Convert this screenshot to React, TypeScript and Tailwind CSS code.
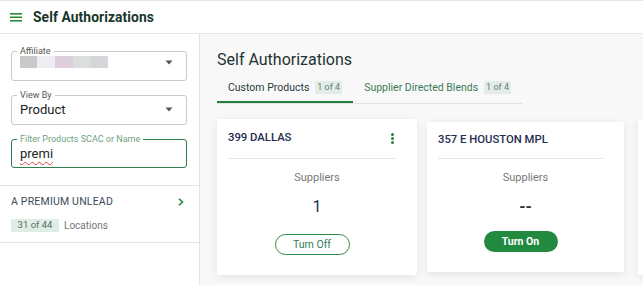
import React from "react";

const font = { fontFamily: "Roboto, 'Liberation Sans', sans-serif" };

function Caret() {
  return (
    <svg width="8" height="5" viewBox="0 0 8 5" className="shrink-0">
      <path d="M0.5 0.5 L7.5 0.5 L4 4.5 Z" fill="#555" />
    </svg>
  );
}

function Card({
  title,
  value,
  on,
  big,
}: {
  title: string;
  value: string;
  on: boolean;
  big: boolean;
}) {
  return (
    <div
      className={`shrink-0 bg-white rounded-[2px] shadow-[0_2px_8px_rgba(0,0,0,0.09)] pl-[11px] pr-[21px] flex flex-col ${
        big ? "w-[200px] h-[156px]" : "w-[197px] h-[150px]"
      }`}
    >
      <div
        className={`flex items-center justify-between border-b border-[#e6e6e6] ${
          big ? "h-[40px] pb-[1px]" : "h-[37px] pb-0"
        }`}
      >
        <span className="text-[11.3px] font-medium text-[#1f2d50]">{title}</span>
        {big && (
          <span className="flex flex-col gap-[1px] mr-[2px]">
            <span className="w-[3px] h-[3px] rounded-full bg-[#22803c]" />
            <span className="w-[3px] h-[3px] rounded-full bg-[#22803c]" />
            <span className="w-[3px] h-[3px] rounded-full bg-[#22803c]" />
          </span>
        )}
      </div>
      <div className="flex flex-col items-center">
        <div className="mt-[12px] text-[11px] leading-[14px] text-[#777] translate-x-[5px]">Suppliers</div>
        <div
          className={`mt-[12px] text-[16px] leading-[20px] translate-x-[5px] ${
            on ? "text-[#1f2f4a]" : "text-[#333] font-bold"
          }`}
        >
          {value}
        </div>
        {on ? (
          <button className="mt-[17px] w-[75px] h-[21px] rounded-full border border-[#2e8b47] text-[10.5px] text-[#2f7d5a] flex items-center justify-center">
            Turn Off
          </button>
        ) : (
          <button className="mt-[14px] w-[74px] h-[21px] rounded-full bg-[#228a3e] text-[10.5px] font-bold text-white flex items-center justify-center">
            Turn On
          </button>
        )}
      </div>
    </div>
  );
}

export default function App() {
  return (
    <div style={font} className="w-[643px] h-[285px] overflow-hidden bg-white flex flex-col">
      {/* header */}
      <div className="h-[34px] shrink-0 border-t border-b border-[#e6e6e6] flex items-center pl-[10px]">
        <svg width="12" height="9" viewBox="0 0 12 9" className="mt-[1px]">
          <rect x="0" y="0" width="12" height="1.6" fill="#2a8a40" />
          <rect x="0" y="3.5" width="12" height="1.6" fill="#2a8a40" />
          <rect x="0" y="7" width="12" height="1.6" fill="#2a8a40" />
        </svg>
        <span className="ml-[11px] text-[13.8px] font-bold text-[#17352a] tracking-[0.1px]">Self Authorizations</span>
      </div>

      <div className="flex flex-1 min-h-0">
        {/* sidebar */}
        <div className="w-[200px] shrink-0 border-r border-[#e3e3e3] bg-white flex flex-col">
          <div className="pt-[12px] pl-[11px] pr-[12px] pb-[17px] border-b border-[#e3e3e3] flex flex-col">
            <fieldset className="h-[35px] border border-[#c9c9c9] rounded-[3px] flex flex-col">
              <legend className="ml-[5px] px-[3px] text-[9px] leading-[10px] text-[#555]">Affiliate</legend>
              <div className="flex-1 flex items-center justify-between pl-[8px] pr-[13px] pb-[3px]">
                <div className="flex h-[12px]">
                  <span className="w-[17px] bg-[#c9c9c9]" />
                  <span className="w-[18px] bg-[#eceef2]" />
                  <span className="w-[18px] bg-[#ddd0dc]" />
                  <span className="w-[18px] bg-[#dcdedd]" />
                  <span className="w-[17px] bg-[#d4d6da]" />
                </div>
                <Caret />
              </div>
            </fieldset>
            <fieldset className="mt-[9px] h-[35px] border border-[#c9c9c9] rounded-[3px] flex flex-col">
              <legend className="ml-[5px] px-[3px] text-[9px] leading-[10px] text-[#555]">View By</legend>
              <div className="flex-1 flex items-center justify-between pl-[8px] pr-[13px] pb-[2px]">
                <span className="text-[13px] text-[#222]">Product</span>
                <Caret />
              </div>
            </fieldset>
            <fieldset className="mt-[9px] h-[34px] border border-[#2e7d4f] rounded-[3px] flex flex-col">
              <legend className="ml-[5px] px-[3px] text-[9px] leading-[10px] text-[#6f9f80]">
                Filter Products SCAC or Name
              </legend>
              <div className="flex-1 flex items-center pl-[8px] pb-[5px]">
                <span className="text-[13px] text-[#222] underline decoration-wavy decoration-[#e04040] decoration-[1px] underline-offset-[3px]">
                  premi
                </span>
              </div>
            </fieldset>
          </div>
          <div className="h-[57px] border-b border-[#e3e3e3] pl-[11px] pr-[15px] pt-[10px] flex flex-col">
            <div className="flex items-center justify-between">
              <span className="text-[10.5px] leading-[12px] text-[#3d4a5c] tracking-[0.2px]">A PREMIUM UNLEAD</span>
              <svg width="6" height="8" viewBox="0 0 6 8">
                <path d="M1 0.8 L4.6 4 L1 7.2" fill="none" stroke="#2a8a40" strokeWidth="1.6" />
              </svg>
            </div>
            <div className="mt-[10px] flex items-center">
              <span className="w-[48px] h-[13px] bg-[#deeee5] text-[9.5px] text-[#5a6a64] flex items-center justify-center">
                31 of 44
              </span>
              <span className="ml-[5px] text-[10px] text-[#777]">Locations</span>
            </div>
          </div>
        </div>

        {/* main */}
        <div className="flex-1 min-w-0 bg-[#f8f8f8] pl-[17px] pt-[15px] flex flex-col overflow-hidden">
          <div className="text-[16px] leading-[22px] text-[#1f3333]">Self Authorizations</div>
          <div className="mt-[1px] flex w-fit border-b border-[#e2e2e2]">
            <div className="h-[31px] pt-[2px] px-[11px] border-b-2 border-[#22803c] flex items-center">
              <span className="text-[10.5px] text-[#2a3a3a]">Custom Products</span>
              <span className="ml-[6px] px-[2px] h-[13px] bg-[#e3ede8] text-[9px] text-[#6b7b75] flex items-center">1 of 4</span>
            </div>
            <div className="h-[31px] pt-[2px] px-[11px] border-b-2 border-transparent flex items-center">
              <span className="text-[10.5px] text-[#3b7a57]">Supplier Directed Blends</span>
              <span className="ml-[6px] px-[2px] h-[13px] bg-[#e3ede8] text-[9px] text-[#6b7b75] flex items-center">1 of 4</span>
            </div>
          </div>
          <div className="mt-[15px] flex items-center gap-[10px]">
            <Card title="399 DALLAS" value="1" on big />
            <Card title="357 E HOUSTON MPL" value="--" on={false} big={false} />
            <div className="ml-[4px] w-[200px] h-[156px] shrink-0 bg-white shadow-[0_2px_8px_rgba(0,0,0,0.09)]" />
          </div>
        </div>
      </div>
    </div>
  );
}
